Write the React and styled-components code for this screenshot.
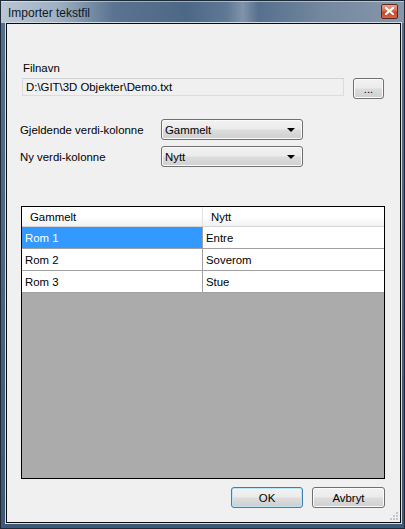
import React from 'react'
import styled, { createGlobalStyle } from 'styled-components'

const Global = createGlobalStyle`
  html, body { margin: 0; padding: 0; background: #fff; }
  body { font-family: "Liberation Sans", "DejaVu Sans", sans-serif; font-size: 11.4px; color: #000; }
`

const Window = styled.div`
  width: 405px;
  height: 529px;
  box-sizing: border-box;
  border: 1px solid #1e2a38;
  background: #3f5a7a;
  display: flex;
  flex-direction: column;
  overflow: hidden;
`

const TitleBar = styled.div`
  height: 22px;
  display: flex;
  align-items: center;
  justify-content: space-between;
  padding: 0 6px 0 7px;
  background: linear-gradient(90deg, #b9c6d4 0%, #9fb0c3 14%, #5a7390 28%, #4d6886 46%, #5f7995 56%, #8093aa 60%, #56708e 64%, #74889f 80%, #8797ab 100%);
  box-shadow: inset 0 1px 0 rgba(255,255,255,0.45);
`

const Title = styled.span`
  font-size: 12px;
  color: #101820;
  margin-top: 1px;
`

const CloseButton = styled.div`
  width: 15px;
  height: 13px;
  margin-top: -2px;
  border: 1px solid #5a2a20;
  border-radius: 2px;
  background: linear-gradient(180deg, #eaa38f 0%, #d86d50 45%, #c4452a 55%, #d7664a 100%);
  display: flex;
  align-items: center;
  justify-content: center;
`

const FrameBody = styled.div`
  flex: 1;
  padding: 0 5px 5px 5px;
  display: flex;
  background: linear-gradient(180deg, #55708f 0%, #3e5878 100%);
`

const Client = styled.div`
  flex: 1;
  border: 1px solid #0c0c0c;
  box-shadow: 0 0 0 1px #d4dce6;
  background: #f0f0f0;
  padding: 37px 15px 0 14px;
  display: flex;
  flex-direction: column;
  position: relative;
`

const Label = styled.div`
  color: #000;
  line-height: 14px;
  margin-left: ${(p) => p.indent || 0}px;
`

const FileRow = styled.div`
  display: flex;
  align-items: flex-start;
  gap: 9px;
  margin-top: 3px;
  margin-left: 1px;
  height: 21px;
`

const FileField = styled.div`
  width: 322px;
  height: 18px;
  box-sizing: border-box;
  border: 1px solid #dadcde;
  border-top-color: #cfd1d3;
  background: #f0f0f0;
  padding: 0 3px;
  line-height: 16px;
  color: #000;
`

const Button = styled.div`
  width: ${(p) => p.width}px;
  height: 21px;
  box-sizing: border-box;
  border: 1px solid ${(p) => (p.primary ? '#3c7fb1' : '#707070')};
  border-radius: 3px;
  background: linear-gradient(180deg, #f2f2f2 0%, #ebebeb 48%, #dddddd 52%, #cfcfcf 100%);
  box-shadow: inset 0 0 0 1px ${(p) => (p.primary ? '#bde4f7' : '#fbfbfb')};
  display: flex;
  align-items: center;
  justify-content: center;
  color: #000;
`

const ComboArea = styled.div`
  margin-top: 20px;
  display: flex;
  flex-direction: column;
  gap: 6px;
`

const ComboRow = styled.div`
  display: grid;
  grid-template-columns: 141px 142px;
  align-items: center;
  margin-left: -1px;
`

const Combo = styled.div`
  height: 21px;
  box-sizing: border-box;
  border: 1px solid #707070;
  border-radius: 3px;
  background: linear-gradient(180deg, #f2f2f2 0%, #ebebeb 48%, #dddddd 52%, #cfcfcf 100%);
  box-shadow: inset 0 0 0 1px #fbfbfb;
  display: flex;
  align-items: center;
  justify-content: space-between;
  padding: 0 7px 0 3px;
`

const Arrow = styled.span`
  width: 0;
  height: 0;
  border-left: 4px solid transparent;
  border-right: 4px solid transparent;
  border-top: 4px solid #000;
  margin-top: 1px;
`

const Grid = styled.div`
  margin-top: 39px;
  width: 364px;
  height: 273px;
  box-sizing: border-box;
  border: 1px solid #000;
  background: #ababab;
  display: flex;
  flex-direction: column;
`

const Row = styled.div`
  display: grid;
  grid-template-columns: 181px 181px;
  height: ${(p) => (p.header ? 20 : 22)}px;
  box-sizing: border-box;
  background: ${(p) => (p.header ? 'linear-gradient(180deg, #ffffff 0%, #ffffff 50%, #f1f2f4 100%)' : '#fff')};
  border-bottom: 1px solid ${(p) => (p.header ? '#d5d5d5' : '#a0a0a0')};
`

const Cell = styled.div`
  display: flex;
  align-items: center;
  padding-left: ${(p) => (p.header ? 8 : 3)}px;
  color: ${(p) => (p.selected ? '#fff' : '#000')};
  background: ${(p) => (p.selected ? '#3399ff' : 'transparent')};
  border-right: 1px solid ${(p) => (p.header ? '#e3e3e3' : '#a0a0a0')};
  &:last-child { border-right: none; }
`

const Footer = styled.div`
  margin-top: 8px;
  display: flex;
  justify-content: flex-end;
  gap: 9px;
`

const Grip = styled.svg`
  position: absolute;
  right: 2px;
  bottom: 2px;
`

const rows = [
  ['Rom 1', 'Entre'],
  ['Rom 2', 'Soverom'],
  ['Rom 3', 'Stue'],
]

export default function App() {
  return (
    <>
      <Global />
      <Window>
        <TitleBar>
          <Title>Importer tekstfil</Title>
          <CloseButton>
            <svg width="9" height="8" viewBox="0 0 9 8">
              <path d="M1 1 L8 7 M8 1 L1 7" stroke="#fff" strokeWidth="2.2" strokeLinecap="square" />
            </svg>
          </CloseButton>
        </TitleBar>
        <FrameBody>
          <Client>
            <Label indent={2}>Filnavn</Label>
            <FileRow>
              <FileField>D:\GIT\3D Objekter\Demo.txt</FileField>
              <Button width={31}>...</Button>
            </FileRow>
            <ComboArea>
              <ComboRow>
                <Label>Gjeldende verdi-kolonne</Label>
                <Combo>
                  Gammelt
                  <Arrow />
                </Combo>
              </ComboRow>
              <ComboRow>
                <Label>Ny verdi-kolonne</Label>
                <Combo>
                  Nytt
                  <Arrow />
                </Combo>
              </ComboRow>
            </ComboArea>
            <Grid>
              <Row header>
                <Cell header>Gammelt</Cell>
                <Cell header>Nytt</Cell>
              </Row>
              {rows.map(([a, b], i) => (
                <Row key={a}>
                  <Cell selected={i === 0}>{a}</Cell>
                  <Cell>{b}</Cell>
                </Row>
              ))}
            </Grid>
            <Footer>
              <Button width={72} primary>OK</Button>
              <Button width={73}>Avbryt</Button>
            </Footer>
            <Grip width="10" height="10" viewBox="0 0 10 10">
              {[[8, 0], [8, 3], [8, 6], [5, 3], [5, 6], [2, 6]].map(([x, y]) => (
                <rect key={x + '-' + y} x={x} y={y + 2} width="2" height="2" fill="#c6c6c6" />
              ))}
            </Grip>
          </Client>
        </FrameBody>
      </Window>
    </>
  )
}
